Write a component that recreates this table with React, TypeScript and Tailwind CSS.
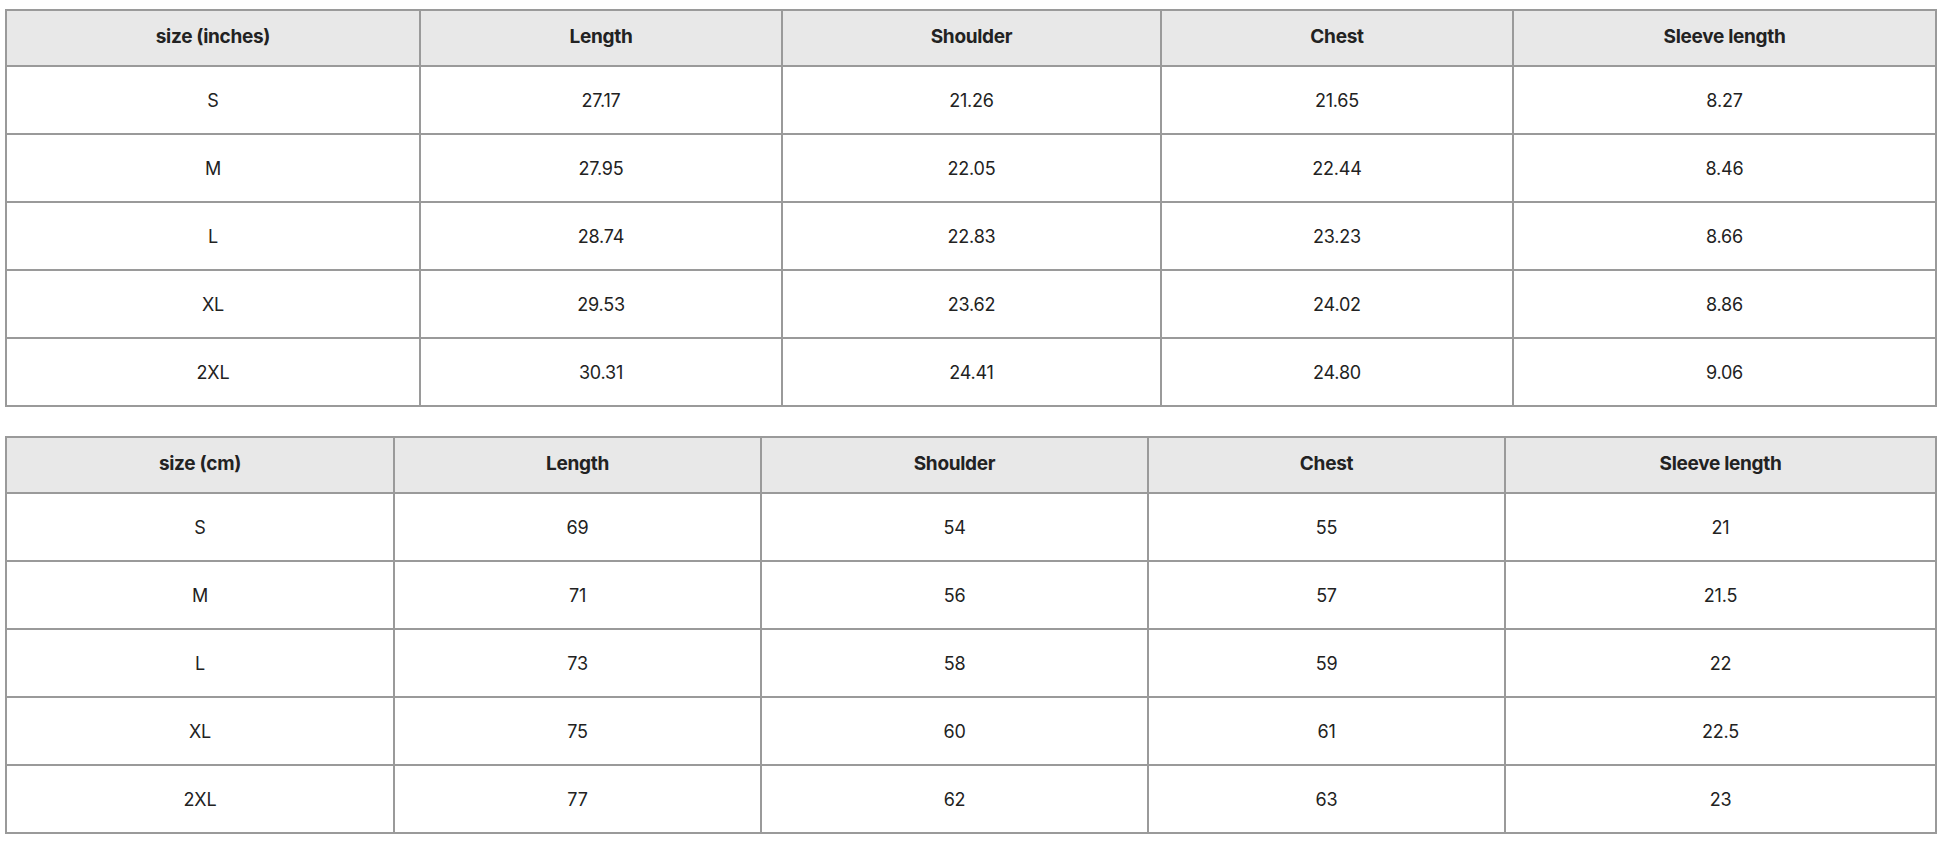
const inches = {
  title: 'size (inches)',
  cols: [414, 362, 379, 352, 423],
  rows: [
    ['S', '27.17', '21.26', '21.65', '8.27'],
    ['M', '27.95', '22.05', '22.44', '8.46'],
    ['L', '28.74', '22.83', '23.23', '8.66'],
    ['XL', '29.53', '23.62', '24.02', '8.86'],
    ['2XL', '30.31', '24.41', '24.80', '9.06'],
  ],
};

const cm = {
  title: 'size (cm)',
  cols: [388, 367, 387, 357, 431],
  rows: [
    ['S', '69', '54', '55', '21'],
    ['M', '71', '56', '57', '21.5'],
    ['L', '73', '58', '59', '22'],
    ['XL', '75', '60', '61', '22.5'],
    ['2XL', '77', '62', '63', '23'],
  ],
};

function SizeTable({ data }: { data: typeof inches }) {
  const heads = [data.title, 'Length', 'Shoulder', 'Chest', 'Sleeve length'];
  return (
    <table className="table-fixed border-collapse w-[1932px] text-[#222]">
      <colgroup>
        {data.cols.map((w, i) => (
          <col key={i} style={{ width: w }} />
        ))}
      </colgroup>
      <thead>
        <tr className="h-[56px] bg-[#e8e8e8]">
          {heads.map((h) => (
            <th key={h} className="border-2 border-[#9a9a9a] text-center text-[19px] font-bold tracking-[-0.3px] pb-[1px]">
              {h}
            </th>
          ))}
        </tr>
      </thead>
      <tbody>
        {data.rows.map((r) => (
          <tr key={r[0]} className="h-[68px]">
            {r.map((c, i) => (
              <td key={i} className="border-2 border-[#9a9a9a] text-center text-[18px] tracking-[-0.2px] pt-[1px]">
                {c}
              </td>
            ))}
          </tr>
        ))}
      </tbody>
    </table>
  );
}

export default function App() {
  return (
    <div className="bg-white min-h-[842px] pl-[5px] pt-[9px] flex flex-col gap-[29px] font-['Inter',sans-serif]">
      <SizeTable data={inches} />
      <SizeTable data={cm} />
    </div>
  );
}
